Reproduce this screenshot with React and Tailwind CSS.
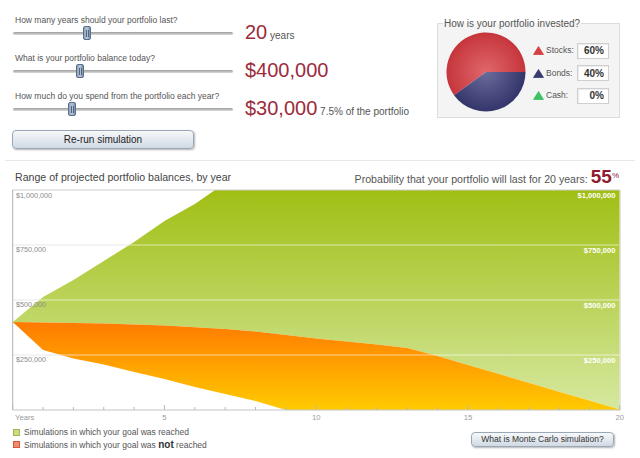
import React from "react";

const X = (yr) => 12.7 + 30.35 * yr;

const greenTopY = [322, 297, 280, 261, 242, 221, 204];
const orangeTopY = [322, 322.5, 323, 323.5, 324.5, 325.5, 327.2, 329, 331.5, 335, 338.5, 341.5, 344.5, 348, 356];
for (let k = 1; k <= 6; k++) orangeTopY.push(356 + ((409.5 - 356) / 6) * k);
const orangeBottomY = [322, 350, 358.5, 364.5, 372, 379, 387, 394, 401, 410];

const pts = (arr) => arr.map(([x, y]) => `${x.toFixed(2)},${y.toFixed(2)}`).join(" ");

const greenPoly = pts([
  ...greenTopY.map((y, i) => [X(i), y]),
  [215, 190],
  [X(20), 190],
  ...orangeTopY.map((y, i) => [X(i), y]).reverse(),
]);

const orangePoly = pts([
  ...orangeTopY.map((y, i) => [X(i), y]),
  [X(20), 410],
  [X(9), 410],
  ...orangeBottomY.slice(1, 9).map((y, i) => [X(i + 1), y]).reverse(),
]);

function Slider({ thumbClass }) {
  return (
    <div className="relative flex h-[14px] items-center">
      <div className="h-[3px] w-full rounded-full bg-gradient-to-b from-[#9c9c9c] to-[#dcdcdc]" />
      <div
        className={
          "absolute top-0 flex h-[14px] w-[8px] justify-center rounded-[2px] border border-[#586d8a] bg-gradient-to-r from-[#8da1ba] via-[#b9c7d8] to-[#7a90ac] " +
          thumbClass
        }
      >
        <div className="mt-[3px] h-[7px] w-[3px] border-x border-[#52647f]" />
      </div>
    </div>
  );
}

function Row({ label, thumbClass, children }) {
  return (
    <div className="flex h-[38px]">
      <div className="w-[220px]">
        <div className="h-[12px] pl-[2px] text-[8.5px] leading-[12px] text-[#555]">{label}</div>
        <Slider thumbClass={thumbClass} />
      </div>
      <div className="ml-[12px] mt-[6px] whitespace-nowrap text-[20px] leading-[24px] text-[#9c2b3c]">{children}</div>
    </div>
  );
}

function Tri({ color }) {
  return (
    <svg width="11" height="9" viewBox="0 0 11 9" className="block">
      <path d="M5.5 0.5 L10.5 8.5 L0.5 8.5 Z" fill={color} stroke={color} strokeWidth="0.8" strokeLinejoin="round" />
    </svg>
  );
}

function Alloc({ color, label, value }) {
  return (
    <div className="flex h-[16px] items-center">
      <Tri color={color} />
      <div className="ml-[2px] w-[31px] text-[8.5px] text-[#555]">{label}</div>
      <div className="flex h-[16px] w-[32px] items-center justify-end border border-[#cfcfcf] bg-white pr-[4px] text-[10px] font-bold text-[#333] shadow-[inset_1px_1px_1px_rgba(0,0,0,0.08)]">
        {value}
      </div>
    </div>
  );
}

function Pie() {
  const c = 40;
  const r = 39.5;
  const a = (144 * Math.PI) / 180;
  const ex = c + r * Math.cos(a);
  const ey = c + r * Math.sin(a);
  return (
    <svg width="80" height="80" viewBox="0 0 80 80" className="block">
      <defs>
        <radialGradient id="pr" cx="40" cy="40" r="40" gradientUnits="userSpaceOnUse">
          <stop offset="0" stopColor="#e0676b" />
          <stop offset="1" stopColor="#c5353b" />
        </radialGradient>
        <radialGradient id="pb" cx="40" cy="40" r="40" gradientUnits="userSpaceOnUse">
          <stop offset="0" stopColor="#6a6c9c" />
          <stop offset="1" stopColor="#33356a" />
        </radialGradient>
      </defs>
      <path d={`M${c},${c} L${ex},${ey} A${r},${r} 0 1 1 ${c + r},${c} Z`} fill="url(#pr)" />
      <path d={`M${c},${c} L${c + r},${c} A${r},${r} 0 0 1 ${ex},${ey} Z`} fill="url(#pb)" />
    </svg>
  );
}

function Chart() {
  const grid = [245, 300, 355];
  const leftLabels = [
    ["$1,000,000", 197.7],
    ["$750,000", 252.2],
    ["$500,000", 307.4],
    ["$250,000", 362.4],
  ];
  const rightLabels = [
    ["$1,000,000", 198.4],
    ["$750,000", 253],
    ["$500,000", 308],
    ["$250,000", 363],
  ];
  return (
    <svg width="640" height="236" viewBox="0 188 640 236" className="block">
      <defs>
        <linearGradient id="gg" x1="0" y1="190" x2="0" y2="410" gradientUnits="userSpaceOnUse">
          <stop offset="0" stopColor="#a0bf14" />
          <stop offset="1" stopColor="#d6e8a0" />
        </linearGradient>
        <linearGradient id="og" x1="0" y1="322" x2="0" y2="410" gradientUnits="userSpaceOnUse">
          <stop offset="0" stopColor="#ff7a00" />
          <stop offset="1" stopColor="#ffcb00" />
        </linearGradient>
      </defs>
      {grid.map((y) => (
        <line key={"g" + y} x1={12.7} x2={619.7} y1={y} y2={y} stroke="#dedede" strokeWidth="1" />
      ))}
      <polygon points={greenPoly} fill="url(#gg)" />
      <polygon points={orangePoly} fill="url(#og)" />
      {grid.map((y) => (
        <line key={"w" + y} x1={12.7} x2={619.7} y1={y} y2={y} stroke="#ffffff" strokeOpacity="0.6" strokeWidth="1" />
      ))}
      <line x1={12.7} x2={619.7} y1={190} y2={190} stroke="#cccccc" strokeWidth="1" />
      <line x1={12.7} x2={12.7} y1={190} y2={410} stroke="#b0b0b0" strokeWidth="1" />
      <line x1={620.2} x2={620.2} y1={190} y2={410} stroke="#d8d8d8" strokeWidth="1" />
      <line x1={12.7} x2={620} y1={410} y2={410} stroke="#c4c4c4" strokeWidth="1" />
      {Array.from({ length: 21 }, (_, i) => (
        <line
          key={"t" + i}
          x1={X(i)}
          x2={X(i)}
          y1={410}
          y2={i % 5 === 0 ? 405 : 407}
          stroke="#b8b8b8"
          strokeWidth="1"
        />
      ))}
      {leftLabels.map(([t, y]) => (
        <text key={"l" + t} x={16} y={y} fontSize="7.2" fill="#8c8c8c" fontFamily="'Liberation Sans', Arial, sans-serif">
          {t}
        </text>
      ))}
      {rightLabels.map(([t, y]) => (
        <text
          key={"r" + t}
          x={615.5}
          y={y}
          fontSize="7.6"
          fontWeight="bold"
          fill="#ffffff"
          textAnchor="end"
          fontFamily="'Liberation Sans', Arial, sans-serif"
        >
          {t}
        </text>
      ))}
      <text x={15} y={419.5} fontSize="7.7" fill="#9a9a9a" fontFamily="'Liberation Sans', Arial, sans-serif">
        Years
      </text>
      {[5, 10, 15, 20].map((yr) => (
        <text
          key={"x" + yr}
          x={X(yr)}
          y={419.5}
          fontSize="7.7"
          fill="#9a9a9a"
          textAnchor="middle"
          fontFamily="'Liberation Sans', Arial, sans-serif"
        >
          {yr}
        </text>
      ))}
    </svg>
  );
}

export default function App() {
  return (
    <div className="h-[458px] w-[640px] overflow-hidden bg-white font-['Liberation_Sans',Arial,sans-serif]">
      {/* Top controls */}
      <div className="flex h-[160px]">
        <div className="w-[437px] pl-[13px] pt-[14px]">
          <Row label="How many years should your portfolio last?" thumbClass="left-[70px]">
            20<span className="text-[10px] text-[#555]"> years</span>
          </Row>
          <Row label="What is your portfolio balance today?" thumbClass="left-[63px]">
            $400,000
          </Row>
          <Row label="How much do you spend from the portfolio each year?" thumbClass="left-[55px]">
            $30,000<span className="text-[10px] text-[#555]"> 7.5% of the portfolio</span>
          </Row>
          <button className="-ml-[1px] mt-[2px] flex h-[19px] w-[182px] items-center justify-center rounded-[4px] border border-[#9aa7b6] bg-gradient-to-b from-[#f7f9fb] to-[#d0d9e3] text-[10px] text-[#222] shadow-[1px_1px_2px_rgba(0,0,0,0.3)]">
            Re-run simulation
          </button>
        </div>
        <fieldset className="mt-[17px] h-[101px] w-[183px] border border-[#dcdcdc] bg-[#f4f4f4]">
          <legend className="ml-[5px] px-[1px] text-[10px] leading-[13px] text-[#555]">
            How is your portfolio invested?
          </legend>
          <div className="flex pl-[8px] pt-[2px]">
            <Pie />
            <div className="ml-[7px] flex flex-col gap-[6.5px] pt-[10.5px]">
              <Alloc color="#d64045" label="Stocks:" value="60%" />
              <Alloc color="#393b70" label="Bonds:" value="40%" />
              <Alloc color="#3cc163" label="Cash:" value="0%" />
            </div>
          </div>
        </fieldset>
      </div>

      <div className="mx-[5px] h-px bg-[#e8e8e8]" />

      {/* Chart header */}
      <div className="flex h-[27px] items-center justify-between pl-[15px] pr-[21px] pt-[6px]">
        <div className="text-[10.6px] text-[#444]">Range of projected portfolio balances, by year</div>
        <div className="whitespace-nowrap text-[10.6px] text-[#555]">
          Probability that your portfolio will last for 20 years:{" "}
          <span className="text-[19px] font-bold leading-none text-[#8e1c2e]">55</span>
          <span className="align-super text-[8px] text-[#8e1c2e]">%</span>
        </div>
      </div>

      <Chart />

      {/* Footer */}
      <div className="flex justify-between">
        <div className="pl-[13px] pt-[3px]">
          <div className="flex h-[11.6px] items-center">
            <div className="h-[7px] w-[7px] border border-[#9fb55c] bg-[#c9df7e]" />
            <span className="ml-[4px] text-[8.5px] text-[#555]">Simulations in which your goal was reached</span>
          </div>
          <div className="flex h-[11.6px] items-center">
            <div className="h-[7px] w-[7px] border border-[#d4583c] bg-[#f28a6a]" />
            <span className="ml-[4px] text-[8.5px] text-[#555]">
              Simulations in which your goal was <span className="text-[10px] font-bold text-[#333]">not</span> reached
            </span>
          </div>
        </div>
        <button className="mr-[26px] mt-[7.7px] flex h-[15px] w-[143px] items-center justify-center rounded-[4px] border border-[#9aa7b6] bg-gradient-to-b from-[#f7f9fb] to-[#d0d9e3] text-[8.5px] text-[#333] shadow-[1px_1px_2px_rgba(0,0,0,0.3)]">
          What is Monte Carlo simulation?
        </button>
      </div>
    </div>
  );
}
